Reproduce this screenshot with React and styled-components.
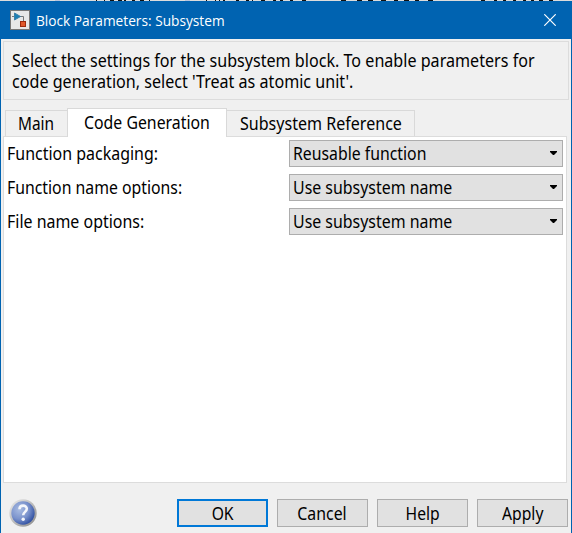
import React from 'react';
import styled, { createGlobalStyle } from 'styled-components';

const Global = createGlobalStyle`
  * { box-sizing: border-box; }
  body { margin: 0; background: #f0f0f0; }
`;

const Backdrop = styled.div`
  width: 572px;
  height: 533px;
  overflow: hidden;
  display: flex;
  flex-direction: column;
  font: 18px/21px 'Noto Sans', sans-serif;
  color: #000;
`;

const Strip = styled.svg`
  display: block;
  flex: none;
`;

const Dialog = styled.main`
  flex: 1;
  display: flex;
  flex-direction: column;
  border: solid #0063b1;
  border-width: 0 1px;
  background: #f0f0f0;
`;

const TitleBar = styled.header`
  height: 38px;
  flex: none;
  display: flex;
  align-items: center;
  padding: 0 15px 0 9px;
  background: #0063b1;
  color: #fff;
  font: 15px/20px 'Open Sans', sans-serif;
`;

const Title = styled.h1`
  margin: 0 auto 0 6px;
  font: inherit;
`;

const Label = styled.span`
  display: block;
  white-space: pre;
  transform: scaleX(${(p) => p.$narrow || 0.88});
  transform-origin: ${(p) => (p.$center ? 'center' : 'left')};
`;

const Description = styled.section`
  height: 59px;
  margin: 2px 2px 0;
  padding: 8px 8px;
  border: 1px solid #dcdcdc;
`;

const Tabs = styled.nav`
  display: flex;
  align-items: flex-end;
  height: 28px;
  margin: 8px 0 0 4px;
`;

const Tab = styled.button`
  font: inherit;
  color: inherit;
  width: ${(p) => p.$w}px;
  height: ${(p) => (p.$active ? 29 : 26)}px;
  padding: ${(p) => (p.$active ? '3px 0 0 16px' : p.$last ? '2px 0 0 13px' : '2px 0 0 12px')};
  display: flex;
  align-items: flex-start;
  border: 1px solid #d9d9d9;
  border-bottom: 0;
  border-left-width: ${(p) => (p.$last ? 0 : 1)}px;
  border-right-width: ${(p) => (p.$first ? 0 : 1)}px;
  background: ${(p) => (p.$active ? '#fff' : '#f0f0f0')};
  margin-bottom: ${(p) => (p.$active ? -1 : 0)}px;
  z-index: ${(p) => (p.$active ? 1 : 0)};
`;

const Panel = styled.section`
  width: 564px;
  height: 347px;
  margin-left: 2px;
  padding: 3px 3px 0;
  border: 1px solid #dcdcdc;
  background: #fff;
  display: flex;
  flex-direction: column;
  gap: 7px;
`;

const Row = styled.div`
  display: grid;
  grid-template-columns: 282px 274px;
  height: 27px;
  align-items: center;
`;

const Select = styled.button`
  font: inherit;
  color: inherit;
  height: 27px;
  padding: 0 5px 0 3px;
  display: flex;
  align-items: center;
  justify-content: space-between;
  border: 1px solid #adadad;
  background: #e1e1e1;
`;

const Arrow = styled.svg`
  display: block;
  margin-top: -2px;
`;

const Footer = styled.footer`
  display: flex;
  align-items: center;
  gap: 9px;
  height: 28px;
  margin-top: 16px;
  padding: 0 3px 0 8px;
`;

const HelpIcon = styled.svg`
  margin-right: auto;
`;

const Button = styled.button`
  font: inherit;
  color: inherit;
  width: 91px;
  height: 28px;
  padding: 0;
  display: flex;
  align-items: center;
  justify-content: center;
  border: ${(p) => (p.$primary ? '2px solid #0078d7' : '1px solid #adadad')};
  background: #e1e1e1;
`;

const description = `Select the settings for the subsystem block. To enable parameters for
code generation, select 'Treat as atomic unit'.`;

const rows = [
  ['Function packaging:', 0.887, 'Reusable function', 0.878],
  ['Function name options:', 0.878, 'Use subsystem name', 0.884],
  ['File name options:', 0.886, 'Use subsystem name', 0.884],
];

const specks = [[96, 1], [104, 1], [110, 4], [118, 4], [124, 2], [132, 3], [140, 4], [149, 1], [206, 1], [215, 1], [219, 1], [223, 2], [236, 3], [246, 3], [252, 1], [261, 4], [273, 3], [280, 3], [290, 3], [302, 4], [341, 5], [357, 5], [368, 5], [381, 5], [394, 4], [404, 5], [415, 4], [428, 5], [481, 4], [494, 3], [503, 3], [513, 3], [523, 3], [531, 3], [539, 4], [549, 4]];

export default function App() {
  return (
    <Backdrop>
      <Global />
      <Strip width="572" height="1" shapeRendering="crispEdges">
        <rect width="572" height="1" fill="#dcdcdc" />
        <rect x="55" width="5" height="1" fill="#b8c4dc" />
        <rect x="185" width="5" height="1" fill="#b8c4dc" />
        {specks.map(([x, w]) => <rect key={x} x={x} width={w} height="1" fill="#111" />)}
      </Strip>
      <Dialog>
        <TitleBar>
          <svg width="20" height="20" viewBox="0 0 20 20">
            <rect x=".5" y=".5" width="19" height="19" fill="#e8e8e8" stroke="#777" />
            <path d="M2 6.5H13.5V12" stroke="#777" fill="none" />
            <path d="M4.5 3L10.5 6.5L4.5 10Z" fill="#1b7fb5" stroke="#3b7fa8" />
            <rect x="10.5" y="11.5" width="5" height="5" fill="#e0572a" stroke="#9c2b0d" />
          </svg>
          <Title><Label $narrow={0.913}>Block Parameters: Subsystem</Label></Title>
          <svg width="12" height="12" viewBox="0 0 12 12"><path d="M.3 .3L11.7 11.7M11.7 .3L.3 11.7" stroke="#fff" strokeWidth="1.2" /></svg>
        </TitleBar>
        <Description>
          <Label $narrow={0.895}>{description}</Label>
        </Description>
        <Tabs>
          <Tab $w={62} $first><Label $narrow={0.855}>Main</Label></Tab>
          <Tab $w={160} $active><Label>Code Generation</Label></Tab>
          <Tab $w={188} $last><Label $narrow={0.892}>Subsystem Reference</Label></Tab>
        </Tabs>
        <Panel>
          {rows.map(([label, labelNarrow, value, valueNarrow]) => (
            <Row key={label}>
              <Label $narrow={labelNarrow}>{label}</Label>
              <Select>
                <Label $narrow={valueNarrow}>{value}</Label>
                <Arrow width="7" height="4" viewBox="0 0 7 4"><path d="M0 0H7V1L4 4H3L0 1Z" /></Arrow>
              </Select>
            </Row>
          ))}
        </Panel>
        <Footer>
          <HelpIcon width="28" height="28" viewBox="0 0 28 28">
            <defs>
              <radialGradient id="ball" cx=".35" cy=".35" r=".75">
                <stop offset="0" stopColor="#a9bce2" /><stop offset=".55" stopColor="#7a92cc" /><stop offset="1" stopColor="#24459a" />
              </radialGradient>
              <linearGradient id="rim" x2="1" y2="1">
                <stop stopColor="#eee" /><stop offset="1" stopColor="#888" />
              </linearGradient>
            </defs>
            <circle cx="14" cy="14" r="13.7" fill="url(#rim)" />
            <circle cx="14" cy="14" r="11.7" fill="url(#ball)" />
            <path d="M10.5 10.2C10.5 5.3 17.8 5.6 17.8 9.8C17.8 12.8 14.2 13 14.2 16.2" fill="none" stroke="#f4f6fb" strokeWidth="2.6" />
            <circle cx="14.2" cy="20.2" r="1.7" fill="#f4f6fb" />
          </HelpIcon>
          <Button $primary><Label $center $narrow={0.87}>OK</Label></Button>
          <Button><Label $center>Cancel</Label></Button>
          <Button><Label $center $narrow={0.87}>Help</Label></Button>
          <Button><Label $center $narrow={0.87}>Apply</Label></Button>
        </Footer>
      </Dialog>
    </Backdrop>
  );
}
